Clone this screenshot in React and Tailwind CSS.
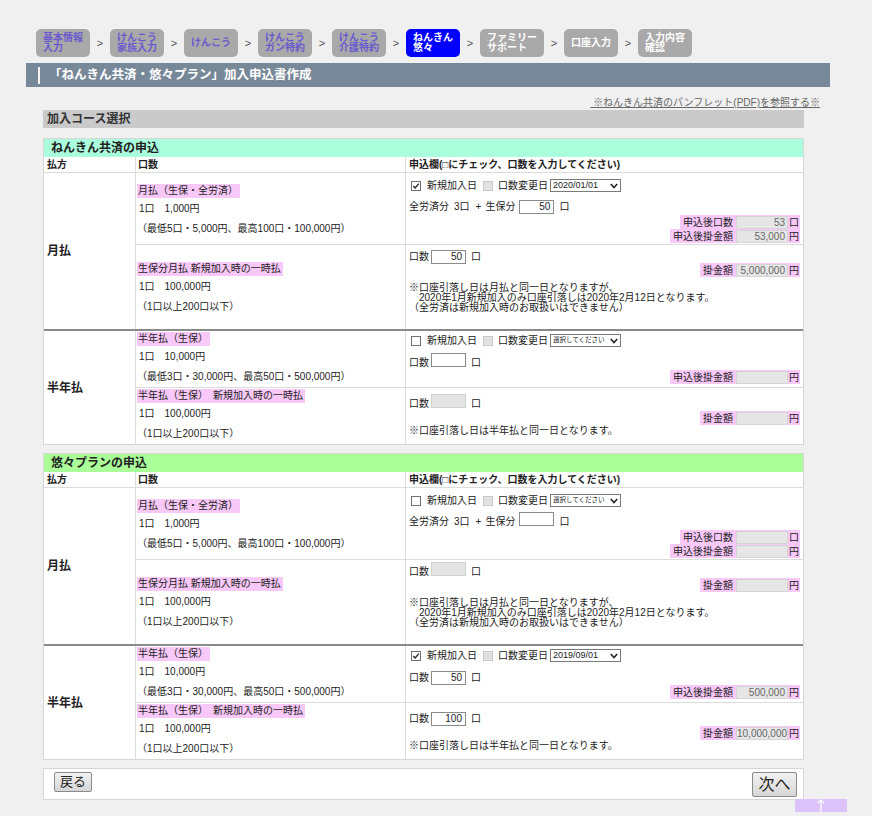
import React from 'react';

// 申込書作成画面 - ねんきん共済・悠々プラン
const steps = [
  { lines: ['基本情報', '入力'], tone: 'done' },
  { lines: ['けんこう', '家族入力'], tone: 'done' },
  { lines: ['けんこう'], tone: 'done' },
  { lines: ['けんこう', 'ガン特約'], tone: 'done' },
  { lines: ['けんこう', '介護特約'], tone: 'done' },
  { lines: ['ねんきん', '悠々'], tone: 'active' },
  { lines: ['ファミリー', 'サポート'], tone: 'todo' },
  { lines: ['口座入力'], tone: 'todo' },
  { lines: ['入力内容', '確認'], tone: 'todo' },
];

const toneClass = {
  done: 'bg-[#a9a9a9] text-[#6a5acd]',
  active: 'bg-[#0000ff] text-white',
  todo: 'bg-[#a9a9a9] text-white',
};

const Check = ({ checked, disabled, className = '' }) => (
  <span
    className={`inline-flex shrink-0 w-[10px] h-[10px] items-center justify-center border ${
      disabled ? 'border-[#c8c8c8] bg-[#e2e2e2]' : 'border-[#707070] bg-white'
    } ${className}`}
  >
    {checked && (
      <svg viewBox="0 0 10 10" className="w-[8px] h-[8px]">
        <path d="M1.5 5 L4 7.5 L8.5 2" stroke="#222" strokeWidth="1.6" fill="none" />
      </svg>
    )}
  </span>
);

const Sel = ({ value }) => (
  <span className="ml-[2px] inline-flex items-center justify-between w-[71px] h-[13px] border border-[#7a7a7a] bg-white pl-[2px] pr-[2px] overflow-hidden">
    <span
      className={
        value
          ? 'text-[9px] leading-none whitespace-nowrap'
          : 'text-[6.6px] leading-none whitespace-nowrap tracking-[-0.1px]'
      }
    >
      {value || '選択してください'}
    </span>
    <svg viewBox="0 0 8 6" className="w-[8px] h-[6px] shrink-0">
      <path d="M0.8 1 L4 4.6 L7.2 1" stroke="#222" strokeWidth="1.5" fill="none" />
    </svg>
  </span>
);

const Inp = ({ value = '', disabled }) => (
  <span
    className={`inline-block w-[35px] h-[14px] border text-right pr-[3px] text-[10px] leading-[12px] ${
      disabled ? 'bg-[#e4e4e4] border-[#d0d0d0]' : 'bg-white border-[#8a8a8a]'
    }`}
  >
    {value}
  </span>
);

const Res = ({ label, value = '', unit, className = '' }) => (
  <div className={`flex justify-end pr-[3px] h-[14px] ${className}`}>
    <span className="flex items-center bg-[#f8c8f8] h-[14px] pl-[3px]">
      <span className="mr-[3px]">{label}</span>
      <span className="w-[52px] h-[13px] bg-[#e6e6e6] border border-[#d4d4d4] text-right pr-[2px] text-[10px] leading-[11px] text-[#666]">
        {value}
      </span>
      <span className="px-[1px]">{unit}</span>
    </span>
  </div>
);

const LineA = ({ checked, date }) => (
  <div className="flex items-center h-[15px] pl-[5px]">
    <Check checked={checked} />
    <span className="ml-[6px]">新規加入日</span>
    <Check disabled className="ml-[6px]" />
    <span className="ml-[5px]">口数変更日</span>
    <Sel value={date} />
  </div>
);

const LineZen = ({ value }) => (
  <div className="flex items-center h-[14px] pl-[3px] mt-[6px]">
    <span>全労済分</span>
    <span className="ml-[5px]">3口</span>
    <span className="ml-[6px]">+</span>
    <span className="ml-[4px]">生保分</span>
    <span className="ml-[4px]"><Inp value={value} /></span>
    <span className="ml-[5px]">口</span>
  </div>
);

const LineKuchi = ({ value, disabled, className = '' }) => (
  <div className={`flex items-center h-[14px] pl-[3px] ${className}`}>
    <span>口数</span>
    <span className="ml-[2px]"><Inp value={value} disabled={disabled} /></span>
    <span className="ml-[5px]">口</span>
  </div>
);

const MonthNote = () => (
  <div className="mt-[6px] pl-[3px] leading-[10px]">
    ※口座引落し日は月払と同一日となりますが、
    <br />
    {'\u3000'}2020年1月新規加入のみ口座引落しは2020年2月12日となります。
    <br />
    （全労済は新規加入時のお取扱いはできません）
  </div>
);

const Mid = ({ label, l1, l2, className = '' }) => (
  <div className={`flex flex-col justify-center pl-[1px] border-r border-[#dcdcdc] ${className}`}>
    <div className="h-[14px]">
      <span className="inline-block h-[14px] leading-[14px] bg-[#f8c8f8] pl-[1px] pr-[2px]">{label}</span>
    </div>
    <div className="mt-[2px] h-[20px] leading-[20px] pl-[2px]">{l1}</div>
    <div className="h-[20px] leading-[20px]">{l2}</div>
  </div>
);

const Group = ({ label, rows, children }) => (
  <div className={`grid grid-cols-[92px_270px_1fr] ${rows}`}>
    <div className="row-span-2 flex items-center pl-[3px] text-[12px] font-bold border-r border-[#dcdcdc]">{label}</div>
    {children}
  </div>
);

const Table = ({ title, head, monthly, half }) => (
  <div className="ml-[43px] w-[761px] border border-[#d6d6d6] bg-white">
    <div className={`h-[18px] pl-[7px] text-[12px] font-bold leading-[18px] text-[#222] ${head}`}>{title}</div>
    <div className="grid grid-cols-[92px_270px_1fr] h-[16px] text-[10px] font-bold leading-[15px] border-b border-[#dcdcdc]">
      <div className="pl-[3px] border-r border-[#dcdcdc]">払方</div>
      <div className="pl-[2px] border-r border-[#dcdcdc]">口数</div>
      <div className="pl-[3px]">申込欄(□にチェック、口数を入力してください)</div>
    </div>

    <Group label="月払" rows="grid-rows-[72px_84px]">
      <Mid
        label="月払（生保・全労済）"
        l1={'1口\u30001,000円'}
        l2="（最低5口・5,000円、最高100口・100,000円）"
        className="border-b pt-[4px]"
      />
      <div className="pt-[5px] border-b border-[#dcdcdc]">
        <LineA checked={monthly.checked} date={monthly.date} />
        <LineZen value={monthly.zen} />
        <Res label="申込後口数" value={monthly.total} unit="口" className="mt-[2px]" />
        <Res label="申込後掛金額" value={monthly.amount} unit="円" />
      </div>
      <Mid
        label="生保分月払 新規加入時の一時払"
        l1={'1口\u3000100,000円'}
        l2="（1口以上200口以下）"
        className="pt-[4px]"
      />
      <div className="pt-[4px]">
        <LineKuchi value={monthly.once} disabled={!monthly.once} />
        <Res label="掛金額" value={monthly.onceAmount} unit="円" />
        <MonthNote />
      </div>
    </Group>

    <div className="h-[2px] bg-[#8a8a8a]" />

    <Group label="半年払" rows="grid-rows-[57px_56px]">
      <Mid
        label="半年払（生保）"
        l1={'1口\u300010,000円'}
        l2="（最低3口・30,000円、最高50口・500,000円）"
        className="border-b"
      />
      <div className="pt-[2px] border-b border-[#dcdcdc]">
        <LineA checked={half.checked} date={half.date} />
        <LineKuchi value={half.kuchi} className="mt-[7px]" />
        <Res label="申込後掛金額" value={half.amount} unit="円" className="mt-[1px]" />
      </div>
      <Mid label={'半年払（生保）\u3000新規加入時の一時払'} l1={'1口\u3000100,000円'} l2="（1口以上200口以下）" />
      <div className="pt-[8px]">
        <LineKuchi value={half.once} disabled={!half.once} />
        <Res label="掛金額" value={half.onceAmount} unit="円" className="mt-[1px]" />
        <div className="h-[12px] leading-[12px] pl-[3px]">※口座引落し日は半年払と同一日となります。</div>
      </div>
    </Group>
  </div>
);

export default function App() {
  return (
    <div className="min-h-[816px] bg-[#f0f0f0] text-[10px] text-[#222] font-['Liberation_Sans','Noto_Sans_CJK_JP',sans-serif]">
      {/* ステップ */}
      <div className="flex items-center pt-[29px] pl-[36px]">
        {steps.map((s, i) => (
          <React.Fragment key={i}>
            {i > 0 && <span className="w-[20px] text-center text-[11px] text-[#555]">&gt;</span>}
            <div
              className={`h-[28px] rounded-[5px] px-[7px] flex flex-col justify-center text-[10px] font-bold leading-[10px] ${toneClass[s.tone]}`}
            >
              {s.lines.map((l) => (
                <span key={l}>{l}</span>
              ))}
            </div>
          </React.Fragment>
        ))}
      </div>

      {/* タイトル */}
      <div className="mt-[6px] ml-[26px] w-[804px] h-[24px] bg-[#778899] flex items-center">
        <span className="ml-[12px] w-[2px] h-[17px] bg-[#f4f4f4]" />
        <span className="ml-[9px] text-[12.5px] font-bold text-white">「ねんきん共済・悠々プラン」加入申込書作成</span>
      </div>

      <div className="h-[23px] flex items-end justify-end pr-[52px] pb-[1px]">
        <span className="underline text-[#666] leading-[12px]">{'\u00a0'}※ねんきん共済のパンフレット(PDF)を参照する※</span>
      </div>

      <div className="ml-[43px] w-[761px] h-[18px] bg-[#cacaca] pl-[4px] text-[12px] font-bold leading-[18px] text-[#333]">
        加入コース選択
      </div>

      <div className="mt-[10px]">
        <Table
          title="ねんきん共済の申込"
          head="bg-[#aaffdd]"
          monthly={{ checked: true, date: '2020/01/01', zen: '50', total: '53', amount: '53,000', once: '50', onceAmount: '5,000,000' }}
          half={{ checked: false, date: '', kuchi: '', amount: '', once: '', onceAmount: '' }}
        />
      </div>

      <div className="mt-[8px]">
        <Table
          title="悠々プランの申込"
          head="bg-[#aaff99]"
          monthly={{ checked: false, date: '', zen: '', total: '', amount: '', once: '', onceAmount: '' }}
          half={{ checked: true, date: '2019/09/01', kuchi: '50', amount: '500,000', once: '100', onceAmount: '10,000,000' }}
        />
      </div>

      {/* フッター */}
      <div className="mt-[8px] ml-[43px] w-[761px] h-[32px] bg-white border border-[#d6d6d6] flex items-start justify-between pt-[3px] pl-[10px] pr-[6px]">
        <button className="h-[20px] w-[38px] border border-[#8a8a8a] rounded-[2px] bg-gradient-to-b from-[#f2f2f2] to-[#d6d6d6] text-[13px] leading-[18px] text-[#222]">
          戻る
        </button>
        <button className="h-[25px] w-[45px] border border-[#8a8a8a] rounded-[2px] bg-gradient-to-b from-[#f2f2f2] to-[#d6d6d6] text-[16px] leading-[23px] text-[#222]">
          次へ
        </button>
      </div>
      <div className="-mt-[1px] ml-[795px] w-[52px] h-[13px] bg-[#dcc4fa] flex justify-center">
        <svg viewBox="0 0 8 13" className="w-[8px] h-[13px]">
          <path d="M4 1 V13 M1 4 L4 1 L7 4" stroke="#fff" strokeWidth="1.2" fill="none" />
        </svg>
      </div>
    </div>
  );
}
